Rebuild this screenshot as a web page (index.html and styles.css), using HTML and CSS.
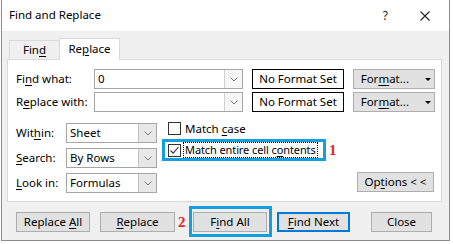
FILE: index.html
```html
<!DOCTYPE html>
<html>
<head>
<meta charset="utf-8">
<link rel="stylesheet" href="styles.css">
</head>
<body>
<div class="dialog">
  <div class="titlebar">
    <span class="title">Find and Replace</span>
    <span class="help">?</span>
    <svg class="xicon" width="10" height="10" viewBox="0 0 10 10"><path d="M0.5 0.5 L9.5 9.5 M9.5 0.5 L0.5 9.5" stroke="#222" stroke-width="1.1" fill="none"/></svg>
  </div>
  <div class="body">
    <div class="tabs">
      <div class="tab">Fin<u>d</u></div>
      <div class="tab active">Re<u>p</u>lace</div>
    </div>
    <div class="panel">
      <div class="row">
        <span class="lbl lbl-wide">Fi<u>n</u>d what:</span>
        <div class="combo combo-wide"><span class="val">0</span><span class="drop"><svg width="8" height="5" viewBox="0 0 8 5"><path d="M0.5 0.5 L4 4 L7.5 0.5" stroke="#777" fill="none"/></svg></span></div>
        <div class="noformat">No Format Set</div>
        <button class="btn fmt"><span>For<u>m</u>at...</span><span class="tri"></span></button>
      </div>
      <div class="row row2">
        <span class="lbl lbl-wide">R<u>e</u>place with:</span>
        <div class="combo combo-wide"><span class="val"></span><span class="drop"><svg width="8" height="5" viewBox="0 0 8 5"><path d="M0.5 0.5 L4 4 L7.5 0.5" stroke="#777" fill="none"/></svg></span></div>
        <div class="noformat">No Format Set</div>
        <button class="btn fmt"><span>For<u>m</u>at...</span><span class="tri"></span></button>
      </div>
      <div class="lower">
        <div class="selects">
          <div class="row">
            <span class="lbl lbl-narrow">Wit<u>h</u>in:</span>
            <div class="combo combo-narrow"><span class="val">Sheet</span><span class="drop list"><svg width="8" height="5" viewBox="0 0 8 5"><path d="M0.5 0.5 L4 4 L7.5 0.5" stroke="#777" fill="none"/></svg></span></div>
          </div>
          <div class="row">
            <span class="lbl lbl-narrow"><u>S</u>earch:</span>
            <div class="combo combo-narrow"><span class="val">By Rows</span><span class="drop list"><svg width="8" height="5" viewBox="0 0 8 5"><path d="M0.5 0.5 L4 4 L7.5 0.5" stroke="#777" fill="none"/></svg></span></div>
          </div>
          <div class="row">
            <span class="lbl lbl-narrow"><u>L</u>ook in:</span>
            <div class="combo combo-narrow"><span class="val">Formulas</span><span class="drop list"><svg width="8" height="5" viewBox="0 0 8 5"><path d="M0.5 0.5 L4 4 L7.5 0.5" stroke="#777" fill="none"/></svg></span></div>
          </div>
        </div>
        <div class="checks">
          <div class="chk chk-plain"><span class="box"></span><span class="chk-lbl">Match <u>c</u>ase</span></div>
          <div class="chk-line">
            <div class="chk chk-hl"><span class="box"><svg width="11" height="11" viewBox="0 0 11 11"><path d="M1.5 5.5 L4.2 8.2 L9.5 2" stroke="#333" stroke-width="1.1" fill="none"/></svg></span><span class="chk-lbl focus">Match entire cell c<u>o</u>ntents</span></div>
            <span class="num">1</span>
          </div>
        </div>
        <button class="btn opts">Op<u>t</u>ions &lt; &lt;</button>
      </div>
    </div>
    <div class="buttons">
      <button class="btn b-replall">Replace <u>A</u>ll</button>
      <button class="btn b-repl"><u>R</u>eplace</button>
      <span class="num num2">2</span>
      <button class="btn b-findall">F<u>i</u>nd All<span class="hl-box"></span></button>
      <button class="btn b-findnext"><u>F</u>ind Next</button>
      <button class="btn b-close">Close</button>
    </div>
  </div>
</div>
</body>
</html>
```

FILE: styles.css
```css
html, body {
  margin: 0;
  padding: 0;
}
body {
  background: #ffffff;
  font-family: "Noto Sans", "Open Sans", sans-serif;
  font-size: 11.5px;
  color: #000;
  width: 453px;
  height: 244px;
  overflow: hidden;
  white-space: nowrap;
}
u {
  text-decoration: underline;
  text-underline-offset: 2px;
  text-decoration-thickness: 1px;
}
.dialog {
  box-sizing: border-box;
  width: 449px;
  height: 241px;
  margin-left: 1px;
  border: 1px solid #8c8c8c;
  border-top: none;
  background: #f0f0f0;
  display: flex;
  flex-direction: column;
}
.titlebar {
  height: 31px;
  background: #ffffff;
  display: flex;
  align-items: center;
  padding-left: 7px;
  flex-shrink: 0;
}
.title {
  font-size: 11.5px;
  line-height: 14px;
  margin-top: -1px;
}
.help {
  margin-left: auto;
  font-size: 12px;
  line-height: 14px;
  color: #222;
}
.xicon {
  margin-left: 32px;
  margin-right: 19px;
}
.body {
  padding: 7px 0 0 5px;
}
.tabs {
  display: flex;
  align-items: flex-end;
  height: 21px;
  padding-left: 2px;
}
.tab {
  box-sizing: border-box;
  width: 50px;
  height: 19px;
  border: 1px solid #d9d9d9;
  border-bottom: none;
  border-right: none;
  background: #f0f0f0;
  text-align: center;
  line-height: 18px;
}
.tab.active {
  width: 61px;
  height: 22px;
  background: #ffffff;
  border-right: 1px solid #d9d9d9;
  margin-bottom: -1px;
  position: relative;
  z-index: 1;
  line-height: 20px;
}
.panel {
  box-sizing: border-box;
  width: 435px;
  height: 143px;
  border: 1px solid #d9d9d9;
  background: #ffffff;
  padding: 9px 0 0 8px;
}
.row {
  display: flex;
  align-items: center;
  height: 20px;
}
.row2 {
  margin-top: 3px;
}
.lbl {
  line-height: 14px;
}
.lbl-wide {
  width: 78px;
}
.lbl-narrow {
  width: 50px;
}
.combo {
  box-sizing: border-box;
  height: 20px;
  border: 1px solid #a6a6a6;
  background: #fff;
  display: flex;
  align-items: stretch;
}
.combo-wide {
  width: 149px;
}
.combo-narrow {
  width: 91px;
}
.val {
  flex: 1;
  padding-left: 3px;
  line-height: 18px;
}
.drop {
  width: 17px;
  border-left: 1px solid #d0d0d0;
  background: #f7f7f7;
  display: flex;
  align-items: center;
  justify-content: center;
}
.drop.list {
  background: #e8e8e8;
  border-left: 1px solid #c4c4c4;
}
.noformat {
  box-sizing: border-box;
  width: 92px;
  height: 20px;
  margin-left: 9px;
  border: 1px solid #000;
  background: #fff;
  text-align: center;
  line-height: 18px;
}
.btn {
  box-sizing: border-box;
  height: 20px;
  padding: 0;
  margin: 0;
  border: 1px solid #adadad;
  background: #e1e1e1;
  font-family: inherit;
  font-size: 11.5px;
  color: #000;
  line-height: 16px;
  text-align: center;
  white-space: nowrap;
}
.fmt {
  width: 82px;
  margin-left: 9px;
  display: flex;
  align-items: center;
  justify-content: flex-end;
  padding-right: 3px;
}
.tri {
  width: 0;
  height: 0;
  border-left: 3px solid transparent;
  border-right: 3px solid transparent;
  border-top: 3px solid #000;
  margin-left: 16px;
}
.lower {
  display: flex;
  margin-top: 10px;
  height: 71px;
}
.selects {
  display: flex;
  flex-direction: column;
  gap: 5px;
  padding-top: 1px;
}
.checks {
  margin-left: 5px;
  display: flex;
  flex-direction: column;
}
.chk {
  display: flex;
  align-items: center;
}
.chk-plain {
  height: 13px;
  padding-left: 6px;
}
.box {
  box-sizing: border-box;
  width: 13px;
  height: 13px;
  border: 1px solid #333;
  background: #fff;
  display: flex;
  align-items: center;
  justify-content: center;
  flex-shrink: 0;
}
.chk-lbl {
  margin-left: 4px;
  line-height: 14px;
  white-space: nowrap;
}
.chk-line {
  display: flex;
  align-items: center;
  margin-top: 4px;
}
.chk-hl {
  box-sizing: border-box;
  width: 164px;
  height: 22px;
  border: 3px solid #14a0e0;
  padding-left: 3px;
}
.focus {
  margin-left: 2px;
  border: 1px dotted #000;
  padding: 0 1px 0 1px;
  line-height: 14px;
  font-size: 11px;
  letter-spacing: -0.1px;
}
.num {
  font-family: "Liberation Serif", serif;
  font-weight: bold;
  font-size: 15px;
  color: #e8232a;
  line-height: 14px;
}
.chk-line .num {
  margin-left: 3px;
}
.opts {
  width: 77px;
  margin-left: auto;
  margin-right: 7px;
  align-self: flex-end;
  margin-bottom: 1px;
}
.buttons {
  display: flex;
  align-items: center;
  margin-top: 10px;
  padding-left: 9px;
  height: 20px;
}
.b-replall {
  width: 74px;
}
.b-repl {
  width: 75px;
  margin-left: 10px;
}
.num2 {
  margin-left: 3px;
  width: 8px;
}
.b-findall {
  width: 74px;
  margin-left: 7px;
  position: relative;
  overflow: visible;
}
.hl-box {
  position: absolute;
  left: -5px;
  top: -7px;
  right: -6px;
  bottom: -6px;
  border: 3px solid #14a0e0;
}
.b-findnext {
  width: 73px;
  margin-left: 10px;
  border: 2px solid #0078d7;
}
.b-close {
  width: 61px;
  margin-left: 21px;
}
```
